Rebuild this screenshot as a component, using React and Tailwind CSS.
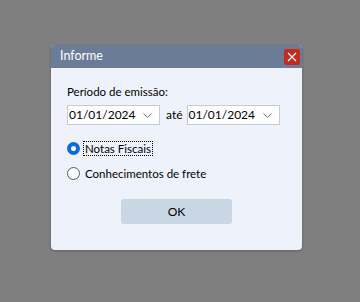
import React, { useState } from 'react';

const font = { fontFamily: '"Segoe UI", Lato, "Liberation Sans", sans-serif' };

const Chevron = () => (
    <svg width="9" height="5" viewBox="0 0 9 5" className="shrink-0">
        <path d="M0.5 0.5 L4.5 4.5 L8.5 0.5" fill="none" stroke="#6b6b6b" strokeWidth="1" />
    </svg>
);

const DateBox = ({ value }) => (
    <div className="flex items-center justify-between h-[20px] w-[93px] bg-white border border-[#c5cbd3] pl-[1px] pr-[7px] text-[12px] text-black">
        <span>{value}</span>
        <Chevron />
    </div>
);

const Radio = ({ checked, label, focused, onClick }) => (
    <div className="flex items-center h-[16px] cursor-default" onClick={onClick}>
        {checked ? (
            <span className="w-[13px] h-[13px] rounded-full border-[4px] border-[#0a6cd6] bg-white box-border" />
        ) : (
            <span className="w-[13px] h-[13px] rounded-full border border-[#4d5a6e] bg-white box-border" />
        )}
        <span className={`ml-[4px] px-[1px] leading-[13px] ${focused ? 'outline outline-1 outline-dotted outline-black' : ''}`}>
            {label}
        </span>
    </div>
);

const App = () => {
    const [tipo, setTipo] = useState('nf');

    return (
        <div className="w-[360px] h-[302px] bg-[#7f7f7f] pt-[45px] pl-[51px]" style={font}>
            <div className="w-[251px] h-[205px] rounded-[4px] overflow-hidden bg-[#eef3fb] shadow-[0_1px_3px_rgba(0,0,0,0.25)] flex flex-col">
                {/* title bar */}
                <div className="h-[23px] bg-[#6b7c99] flex items-center justify-between pl-[9px] pr-[2px]">
                    <span className="text-white text-[12.5px]">Informe</span>
                    <button className="w-[16px] h-[16px] bg-[#c42b1c] rounded-[2px] flex items-center justify-center">
                        <svg width="10" height="10" viewBox="0 0 10 10">
                            <path d="M1 1 L9 9 M9 1 L1 9" stroke="#fff" strokeWidth="1.2" />
                        </svg>
                    </button>
                </div>

                <div className="flex flex-col pl-[16px] pt-[16px] text-[11.5px] text-black">
                    <div className="leading-[16px]">Período de emissão:</div>
                    <div className="flex items-center mt-[5px]">
                        <DateBox value="01/01/2024" />
                        <span className="ml-[6px] mr-[4px] text-[12px]">até</span>
                        <DateBox value="01/01/2024" />
                    </div>

                    <div className="mt-[15px]">
                        <Radio checked={tipo === 'nf'} focused={tipo === 'nf'} label="Notas Fiscais" onClick={() => setTipo('nf')} />
                    </div>
                    <div className="mt-[9px]">
                        <Radio checked={tipo === 'ct'} focused={tipo === 'ct'} label="Conhecimentos de frete" onClick={() => setTipo('ct')} />
                    </div>

                    <div className="mt-[18px] pr-[16px] flex justify-center">
                        <button className="w-[111px] h-[25px] bg-[#c9d7e4] rounded-[3px] text-[12px] text-black">OK</button>
                    </div>
                </div>
            </div>
        </div>
    );
};

export default App;
